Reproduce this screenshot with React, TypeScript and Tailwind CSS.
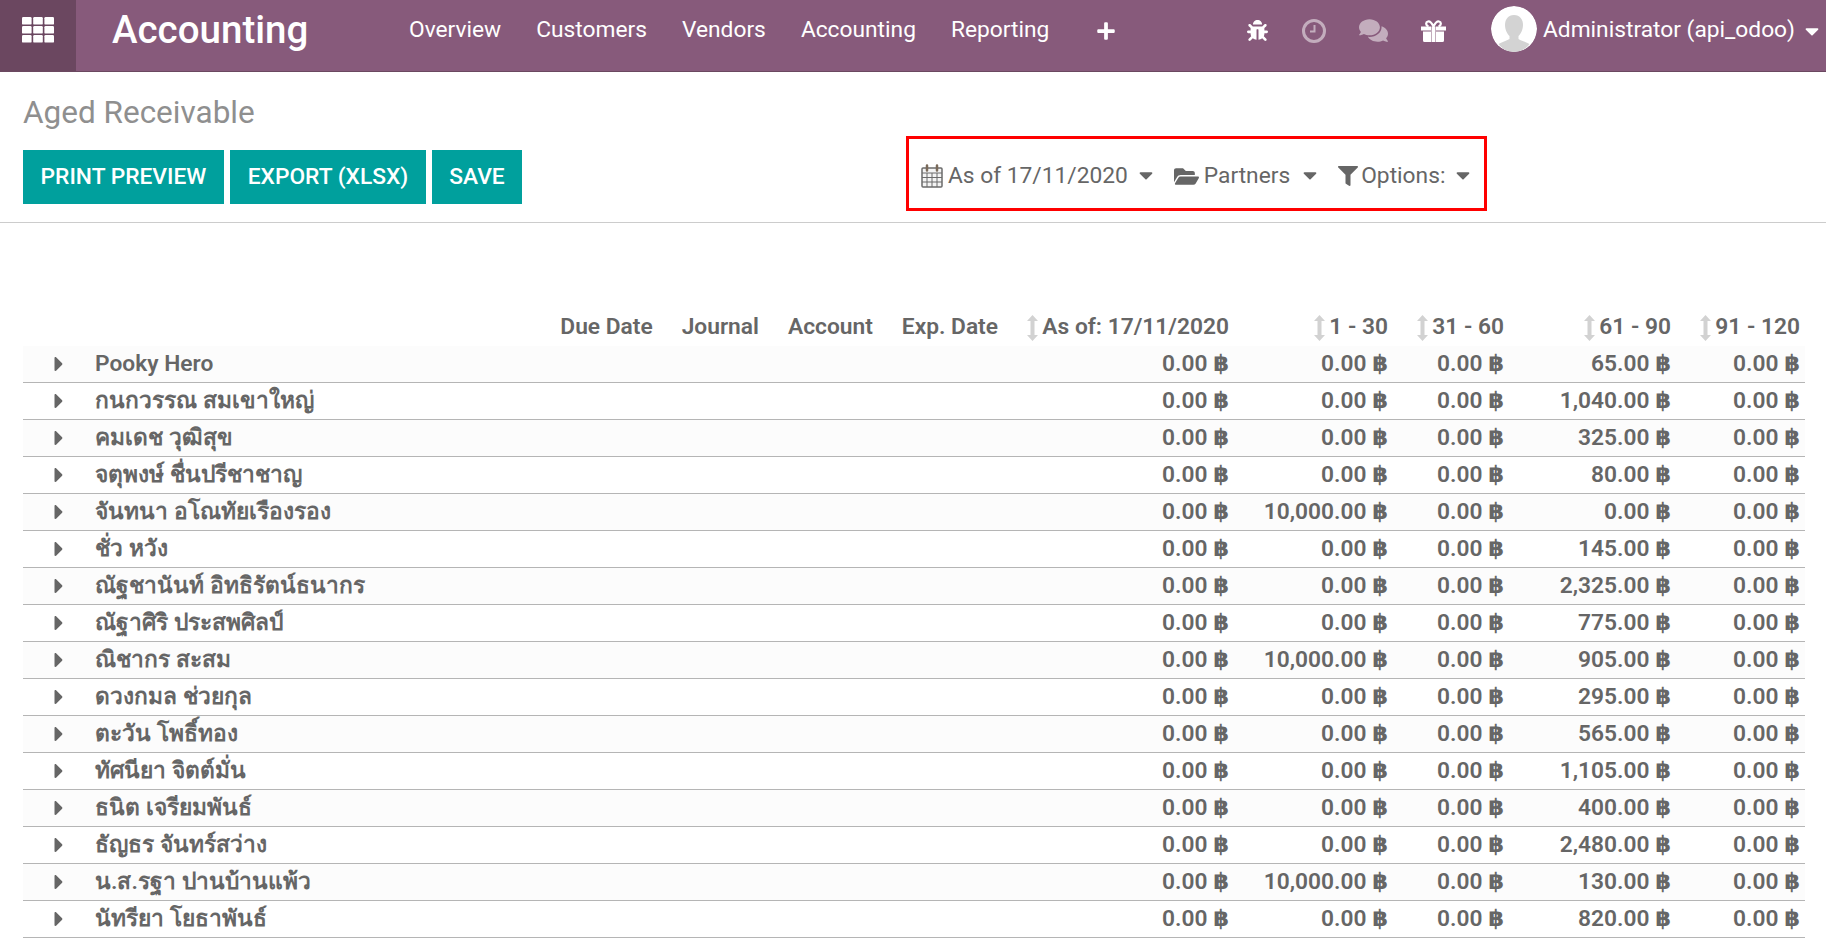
import { FaBug, FaCaretDown, FaCaretRight, FaComments, FaFilter, FaFolderOpen, FaPlus } from "react-icons/fa";

const menus = ["Overview", "Customers", "Vendors", "Accounting", "Reporting"];

const partners: [string, string, string][] = [
  ["Pooky Hero", "0.00", "65.00"],
  ["กนกวรรณ สมเขาใหญ่", "0.00", "1,040.00"],
  ["คมเดช วุฒิสุข", "0.00", "325.00"],
  ["จตุพงษ์ ชื่นปรีชาชาญ", "0.00", "80.00"],
  ["จันทนา อโณทัยเรืองรอง", "10,000.00", "0.00"],
  ["ชั่ว หวัง", "0.00", "145.00"],
  ["ณัฐชานันท์ อิทธิรัตน์ธนากร", "0.00", "2,325.00"],
  ["ณัฐาศิริ ประสพศิลป์", "0.00", "775.00"],
  ["ณิชากร สะสม", "10,000.00", "905.00"],
  ["ดวงกมล ช่วยกุล", "0.00", "295.00"],
  ["ตะวัน โพธิ์ทอง", "0.00", "565.00"],
  ["ทัศนียา จิตต์มั่น", "0.00", "1,105.00"],
  ["ธนิต เจรียมพันธ์", "0.00", "400.00"],
  ["ธัญธร จันทร์สว่าง", "0.00", "2,480.00"],
  ["น.ส.รฐา ปานบ้านแพ้ว", "10,000.00", "130.00"],
  ["นัทรียา โยธาพันธ์", "0.00", "820.00"],
];

const rowGrid = "grid grid-cols-[70px_1fr_170px_159px_116px_167px_129px] pr-[5px]";

function AppsIcon() {
  return (
    <svg width="32" height="26" viewBox="0 0 32 26" fill="currentColor">
      {[0, 11.2, 22.4].map((x) =>
        [0, 9, 18].map((y) => <rect key={`${x}-${y}`} x={x} y={y} width="9.6" height="7.6" rx="1.2" />)
      )}
    </svg>
  );
}

function ClockIcon() {
  return (
    <svg width="24" height="24" viewBox="0 0 24 24" fill="none" stroke="currentColor">
      <circle cx="12" cy="12" r="10.5" strokeWidth="3" />
      <path d="M12.5 6v6.5H8" strokeWidth="2" />
    </svg>
  );
}

function GiftIcon() {
  return (
    <svg width="25" height="22" viewBox="0 0 25 22" fill="currentColor">
      <path d="M0 6.500h10v4H0zM15 6.500h10v4H15zM2 11.500h8V22H3.500A1.500 1.500 0 0 1 2 20.500zM15 11.500h8v9a1.500 1.500 0 0 1-1.500 1.500H15zM10.500 6.500h4V22h-4z" />
      <path d="M12.500 6.500C10 1.500 8.500 1.200 7 1.500 4.500 2 4.500 5.500 7.500 6.500M12.500 6.500C15 1.500 16.500 1.200 18 1.500 20.500 2 20.500 5.500 17.500 6.500" fill="none" stroke="currentColor" strokeWidth="2.200" />
    </svg>
  );
}

function AvatarIcon() {
  return (
    <svg width="46" height="46" viewBox="0 0 46 46" className="rounded-full shrink-0">
      <circle cx="23" cy="23" r="23" fill="#ffffff" />
      <path d="M23 9c6 0 9 4.500 9 10 0 5-2.500 9-4.500 11v3c3 2 8 3 11 5-3.500 5-9 8-15.500 8s-12-3-15.500-8c3-2 8-3 11-5v-3C16.500 28 14 24 14 19c0-5.500 3-10 9-10z" fill="#d3d3d3" />
    </svg>
  );
}

function CalendarIcon() {
  return (
    <svg width="22" height="24" viewBox="0 0 22 24" fill="none" stroke="#6b6b6b" strokeWidth="1" className="shrink-0">
      <rect x="1" y="4" width="20" height="19" rx="1" fill="#f4f4f4" strokeWidth="1.500" />
      <path d="M1 9h20M1 13.500h20M1 18h20M6 9v14M11 9v14M16 9v14" />
      <path d="M6 1.500v5M16 1.500v5" strokeWidth="2.500" strokeLinecap="round" stroke="#7a6a5a" />
    </svg>
  );
}

function SortArrow() {
  return (
    <svg width="11" height="26" viewBox="0 0 11 26" fill="#d2d2d2" className="shrink-0">
      <path d="M5.500 0L11 6H7.500v14H11l-5.500 6L0 20h3.500V6H0z" />
    </svg>
  );
}

function SortHead({ label }: { label: string }) {
  return (
    <span className="flex items-center justify-end gap-[4px]">
      <SortArrow />
      {label}
    </span>
  );
}

function App() {
  return (
    <div className="h-[941px] overflow-hidden bg-white text-[#666666] font-['Roboto','Noto_Sans','DejaVu_Sans',sans-serif]">
      <header className="h-[72px] bg-[#875a7b] border-b border-[#6b4860] flex items-start text-white">
        <div className="w-[76px] h-full bg-[#6b4760] flex items-start justify-center pt-[17px]">
          <AppsIcon />
        </div>
        <div className="h-[61px] flex items-center grow">
          <div className="ml-[36px] text-[38.5px] w-[297px] leading-none font-medium">Accounting</div>
          <nav className="flex items-center gap-[35px] text-[22.75px]">
            {menus.map((m) => (
              <span key={m}>{m}</span>
            ))}
            <FaPlus className="ml-[12px] text-[20px]" />
          </nav>
          <div className="ml-auto flex items-center text-[22.75px]">
            <FaBug className="text-[21px]" />
            <span className="ml-[34px] text-white/50"><ClockIcon /></span>
            <FaComments className="ml-[33px] text-[29px] text-white/50" />
            <span className="ml-[33px]"><GiftIcon /></span>
            <span className="ml-[45px] -mt-[4px]"><AvatarIcon /></span>
            <span className="ml-[6px]">Administrator (api_odoo)</span>
            <FaCaretDown className="ml-[6px] mr-[3px] text-[22px]" />
          </div>
        </div>
      </header>

      <div className="h-[151px] border-b border-[#cccccc] px-[23px] flex flex-col">
        <h1 className="mt-[21px] text-[31.5px] leading-[40px] text-[#8f8f8f] font-normal">Aged Receivable</h1>
        <div className="mt-[17px] flex items-start">
          <div className="flex gap-[6px] text-[22.75px] text-white font-medium">
            <button className="h-[54px] w-[201px] bg-[#00a09d]">PRINT PREVIEW</button>
            <button className="h-[54px] w-[196px] bg-[#00a09d]">EXPORT (XLSX)</button>
            <button className="h-[54px] w-[90px] bg-[#00a09d]">SAVE</button>
          </div>
          <div className="ml-[384px] -mt-[14px] w-[581px] h-[75px] border-[3px] border-[#ff0000] flex items-center pl-[12px] pt-[5px] text-[22.75px] whitespace-nowrap">
            <CalendarIcon />
            <span className="ml-[5px]">As of 17/11/2020</span>
            <FaCaretDown className="ml-[7px] -mt-[2px] text-[22px]" />
            <FaFolderOpen className="ml-[17px] text-[25px]" />
            <span className="ml-[5px]">Partners</span>
            <FaCaretDown className="ml-[9px] -mt-[2px] text-[22px]" />
            <FaFilter className="ml-[17px] text-[20px]" />
            <span className="ml-[3px]">Options:</span>
            <FaCaretDown className="ml-[7px] -mt-[2px] text-[22px]" />
          </div>
        </div>
      </div>

      <div className="mt-[86px] ml-[23px] mr-[21px] text-[22.75px] font-semibold">
        <div className="h-[37px] flex items-center justify-end pr-[5px]">
          <div className="mr-[29px]">Due Date</div>
          <div className="mr-[29px]">Journal</div>
          <div className="mr-[29px]">Account</div>
          <div className="mr-[27px]">Exp. Date</div>
          <div className="w-[204px]"><SortHead label="As of: 17/11/2020" /></div>
          <div className="w-[159px]"><SortHead label="1 - 30" /></div>
          <div className="w-[116px]"><SortHead label="31 - 60" /></div>
          <div className="w-[167px]"><SortHead label="61 - 90" /></div>
          <div className="w-[129px]"><SortHead label="91 - 120" /></div>
        </div>
        {partners.map(([name, d30, d90], i) => (
          <div key={name} className={`${rowGrid} h-[37px] items-center border-b border-[#b5b5b5] ${i % 2 === 0 ? "bg-[#fcfcfc]" : "bg-white"}`}>
            <div className="flex justify-end pr-[22px]">
              <FaCaretRight className="text-[24px]" />
            </div>
            <div className="pl-[2px]">{name}</div>
            <div className="text-right">0.00 ฿</div>
            <div className="text-right">{d30} ฿</div>
            <div className="text-right">0.00 ฿</div>
            <div className="text-right">{d90} ฿</div>
            <div className="text-right">0.00 ฿</div>
          </div>
        ))}
      </div>
    </div>
  );
}

export default App;
